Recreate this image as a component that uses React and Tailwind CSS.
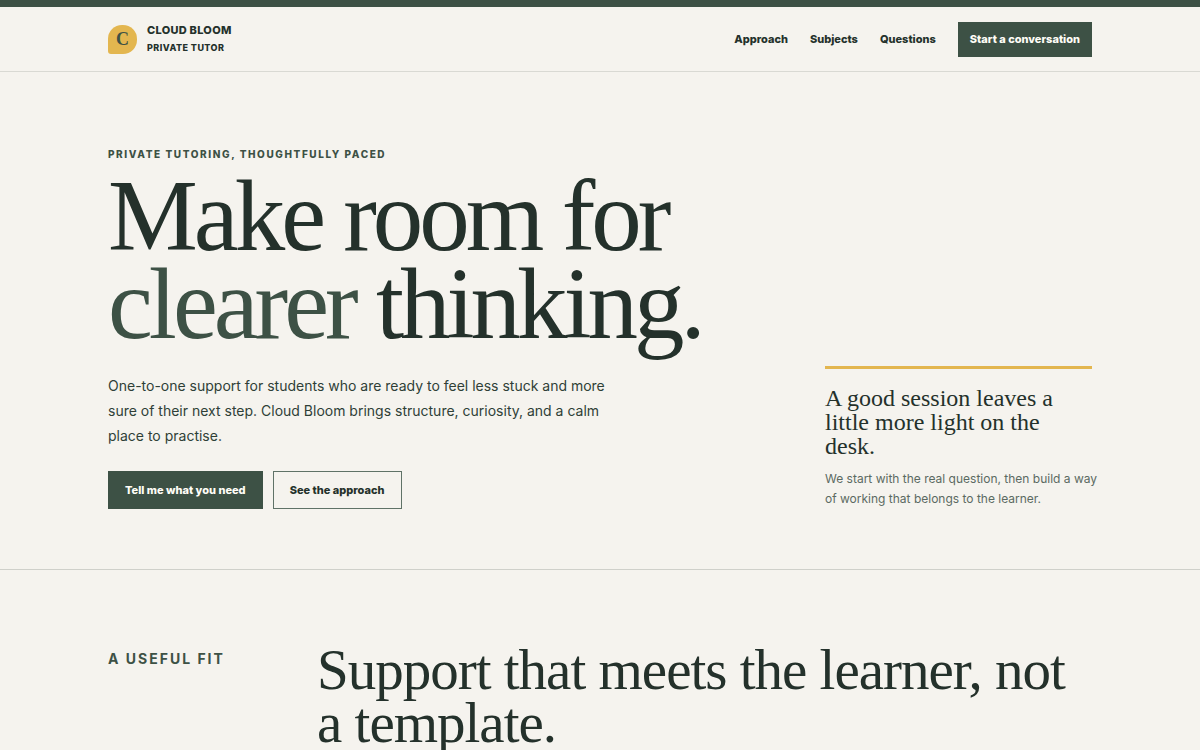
import React from 'react';

const navLinks = [
  { label: 'Approach', href: '#approach' },
  { label: 'Subjects', href: '#subjects' },
  { label: 'Questions', href: '#questions' },
];

function Header() {
  return (
    <header className="border-t-7 border-b border-t-[#3d5145] border-b-[#d9d9d3]">
      <div className="mx-auto flex w-[82%] items-center justify-between py-[14px]">
        <a href="#top" className="flex items-center gap-[10px]">
          <span className="flex size-[29px] items-center justify-center rounded-t-[14px] rounded-br-[14px] rounded-bl-[3px] bg-[#e3b64f] font-['Liberation_Serif',serif] text-lg leading-none font-bold text-[#3d5145]">
            C
          </span>
          <span className="flex flex-col font-extrabold uppercase">
            <span className="text-[11px] leading-[18px] tracking-wide">Cloud Bloom</span>
            <span className="text-[9px] leading-[18px] tracking-wider">Private tutor</span>
          </span>
        </a>
        <nav className="flex items-center gap-[22px] text-[11px] leading-[17px] font-extrabold">
          {navLinks.map(link => (
            <a key={link.href} href={link.href} className="hover:text-[#3d5145]">{link.label}</a>
          ))}
          <a href="#contact" className="bg-[#3d5145] px-3 py-[9px] text-[#fffdf7] hover:bg-[#24312b]">
            Start a conversation
          </a>
        </nav>
      </div>
    </header>
  );
}

function Hero() {
  return (
    <section id="top" className="border-b border-[#cfd0ca]">
      <div className="mx-auto flex w-[82%] items-end justify-between gap-16 pt-[74px] pb-[60px]">
        <div>
          <p className="text-[10px] leading-[17px] font-extrabold tracking-[0.16em] text-[#3d5145] uppercase">
            Private tutoring, thoughtfully paced
          </p>
          <h1 className="mt-[9px] font-['Liberation_Serif',serif] text-[101px] leading-[88px] tracking-[-4px]">
            Make room for<br />
            <span className="text-[#3d5145]">clearer</span> thinking.
          </h1>
          <p className="mt-[25px] max-w-[510px] text-sm leading-[25px] text-[#2f3f37]">
            One-to-one support for students who are ready to feel less stuck and more sure of their
            next step. Cloud Bloom brings structure, curiosity, and a calm place to practise.
          </p>
          <div className="mt-[23px] flex gap-[10px] text-[11px] leading-4 font-extrabold">
            <a href="#contact" className="border border-[#3d5145] bg-[#3d5145] px-4 py-[10px] text-[#fffdf7]">
              Tell me what you need
            </a>
            <a href="#approach" className="border border-[#5f7267] px-4 py-[10px]">
              See the approach
            </a>
          </div>
        </div>
        <aside className="w-[267px] shrink-0 border-t-3 border-[#e3b64f] pt-[17px]">
          <h2 className="font-['Liberation_Serif',serif] text-2xl leading-6">
            A good session leaves a little more light on the desk.
          </h2>
          <p className="mt-[11px] text-xs leading-5 whitespace-nowrap text-[#5b6a62]">
            We start with the real question, then build a way<br />
            of working that belongs to the learner.
          </p>
        </aside>
      </div>
    </section>
  );
}

function UsefulFit() {
  return (
    <section id="approach">
      <div className="mx-auto flex w-[82%] items-start pt-[73px] pb-20">
        <h2 className="mt-[6px] w-[209px] shrink-0 text-sm leading-5 font-bold tracking-[2px] text-[#3d5145] uppercase">
          A useful fit
        </h2>
        <p className="font-['Liberation_Serif',serif] text-[57px] leading-[53px] tracking-[-1px]">
          Support that meets the learner, not a template.
        </p>
      </div>
    </section>
  );
}

export default function App() {
  return (
    <div className="min-h-screen bg-[#f5f3ee] font-['Inter',sans-serif] text-[#24312b]">
      <Header />
      <main>
        <Hero />
        <UsefulFit />
      </main>
    </div>
  );
}
